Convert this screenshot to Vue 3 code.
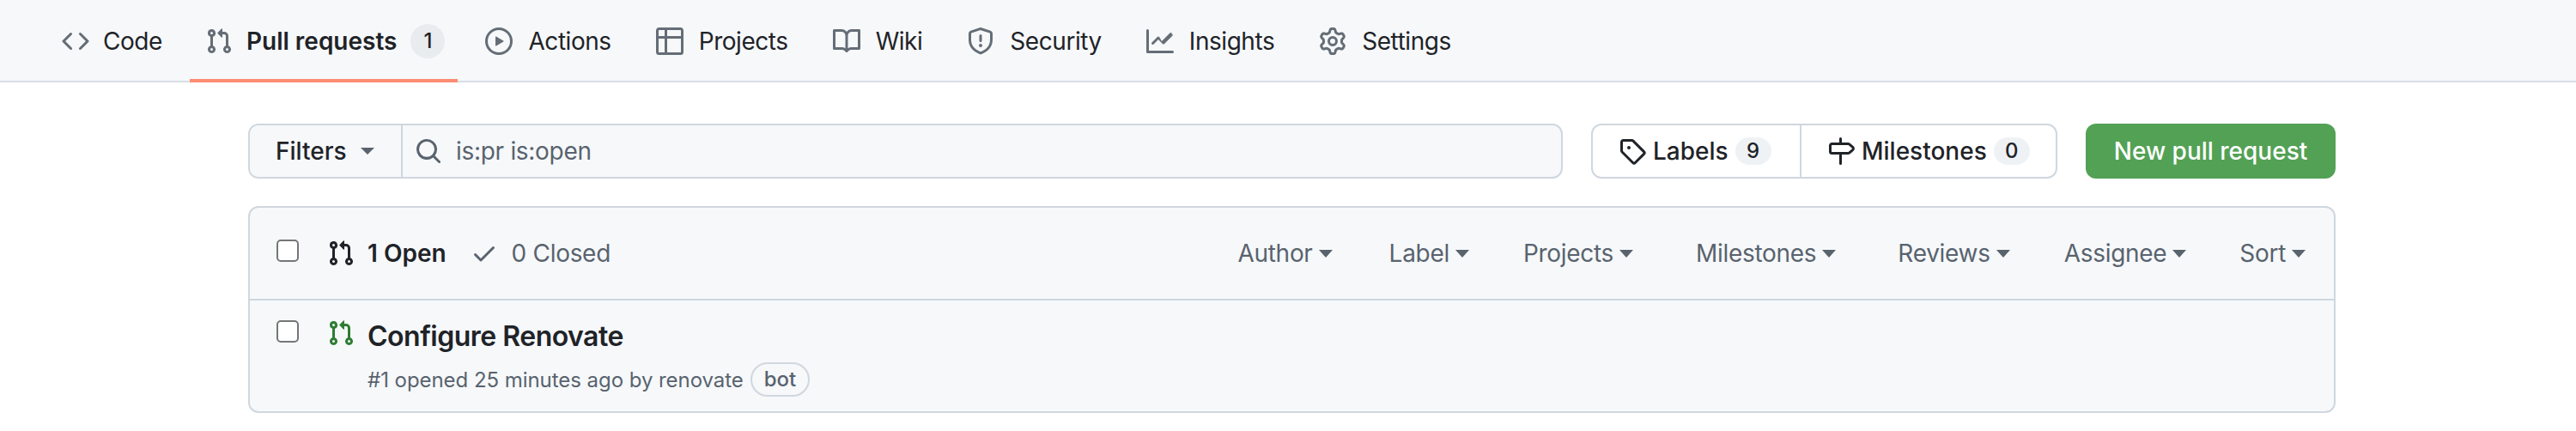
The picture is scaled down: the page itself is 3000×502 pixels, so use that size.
<template>
  <div class="page">
    <nav class="tabs">
      <a v-for="tab in tabs" :key="tab.label" class="tab" :class="{ active: tab.active }">
        <svg class="icon tab-icon" viewBox="0 0 16 16"><path :d="icons[tab.icon]" /></svg>
        <span class="tab-label">{{ tab.label }}</span>
        <span v-if="tab.count" class="tab-count">{{ tab.count }}</span>
      </a>
    </nav>

    <main class="content">
      <div class="toolbar">
        <div class="search">
          <button class="filters" type="button">Filters <span class="caret"></span></button>
          <div class="search-field">
            <svg class="icon search-icon" viewBox="0 0 16 16"><path :d="icons.search" /></svg>
            <span>is:pr is:open</span>
          </div>
        </div>
        <div class="links">
          <a class="link link-labels">
            <svg class="icon" viewBox="0 0 16 16"><path :d="icons.tag" /></svg>
            Labels <span class="count">9</span>
          </a>
          <a class="link link-milestones">
            <svg class="icon" viewBox="0 0 16 16"><path :d="icons.milestone" /></svg>
            Milestones <span class="count">0</span>
          </a>
        </div>
        <button class="new-pr" type="button">New pull request</button>
      </div>

      <div class="list">
        <div class="list-header">
          <span class="checkbox"></span>
          <svg class="icon pr-icon" viewBox="0 0 16 16"><path :d="icons.pull" /></svg>
          <span class="state open">1 Open</span>
          <svg class="icon check-icon" viewBox="0 0 16 16"><path :d="icons.check" /></svg>
          <span class="state closed">0 Closed</span>
          <div class="list-filters">
            <span
              v-for="f in filters"
              :key="f.label"
              class="list-filter"
              :style="{ marginLeft: f.gap + 'px' }"
            >{{ f.label }}<span class="caret small"></span></span>
          </div>
        </div>
        <div class="row">
          <span class="checkbox"></span>
          <svg class="icon pr-icon green" viewBox="0 0 16 16"><path :d="icons.pull" /></svg>
          <div class="row-body">
            <div class="row-title">Configure Renovate</div>
            <div class="row-meta">#1 opened 25 minutes ago by renovate <span class="bot">bot</span></div>
          </div>
        </div>
      </div>
    </main>
  </div>
</template>

<script setup>
const icons = {
  code: 'm11.28 3.22 4.25 4.25a.75.75 0 0 1 0 1.06l-4.25 4.25a.749.749 0 0 1-1.275-.326.749.749 0 0 1 .215-.734L13.94 8l-3.72-3.72a.749.749 0 0 1 .326-1.275.749.749 0 0 1 .734.215Zm-6.56 0a.751.751 0 0 1 1.042.018.751.751 0 0 1 .018 1.042L2.06 8l3.72 3.72a.749.749 0 0 1-.326 1.275.749.749 0 0 1-.734-.215L.47 8.53a.75.75 0 0 1 0-1.06Z',
  pull: 'M1.5 3.25a2.25 2.25 0 1 1 3 2.122v5.256a2.251 2.251 0 1 1-1.5 0V5.372A2.25 2.25 0 0 1 1.5 3.25Zm5.677-.177L9.573.677A.25.25 0 0 1 10 .854V2.5h1A2.5 2.5 0 0 1 13.5 5v5.628a2.251 2.251 0 1 1-1.5 0V5a1 1 0 0 0-1-1h-1v1.646a.25.25 0 0 1-.427.177L7.177 3.427a.25.25 0 0 1 0-.354ZM3.75 2.5a.75.75 0 1 0 0 1.5.75.75 0 0 0 0-1.5Zm0 9.5a.75.75 0 1 0 0 1.5.75.75 0 0 0 0-1.5Zm8.25.75a.75.75 0 1 0 1.5 0 .75.75 0 0 0-1.5 0Z',
  play: 'M8 0a8 8 0 1 1 0 16A8 8 0 0 1 8 0ZM1.5 8a6.5 6.5 0 1 0 13 0 6.5 6.5 0 0 0-13 0Zm4.879-2.773 4.264 2.559a.25.25 0 0 1 0 .428l-4.264 2.559A.25.25 0 0 1 6 10.559V5.442a.25.25 0 0 1 .379-.215Z',
  table: 'M0 1.75C0 .784.784 0 1.75 0h12.5C15.216 0 16 .784 16 1.75v12.5A1.75 1.75 0 0 1 14.25 16H1.75A1.75 1.75 0 0 1 0 14.25ZM6.5 6.5v8h7.75a.25.25 0 0 0 .25-.25V6.5Zm8-1.5V1.75a.25.25 0 0 0-.25-.25H6.5V5Zm-13 1.5v7.75c0 .138.112.25.25.25H5v-8ZM5 5V1.5H1.75a.25.25 0 0 0-.25.25V5Z',
  book: 'M0 1.75A.75.75 0 0 1 .75 1h4.253c1.227 0 2.317.59 3 1.501A3.743 3.743 0 0 1 11.006 1h4.245a.75.75 0 0 1 .75.75v10.5a.75.75 0 0 1-.75.75h-4.507a2.25 2.25 0 0 0-1.591.659l-.622.621a.75.75 0 0 1-1.06 0l-.622-.621A2.25 2.25 0 0 0 5.258 13H.75a.75.75 0 0 1-.75-.75Zm7.251 10.324.004-5.073-.002-2.253A2.25 2.25 0 0 0 5.003 2.5H1.5v9h3.757a3.75 3.75 0 0 1 1.994.574ZM8.755 4.75l-.004 7.322a3.752 3.752 0 0 1 1.992-.572H14.5v-9h-3.495a2.25 2.25 0 0 0-2.25 2.25Z',
  shield: 'M7.467.133a1.748 1.748 0 0 1 1.066 0l5.25 1.68A1.75 1.75 0 0 1 15 3.48V7c0 1.566-.32 3.182-1.303 4.682-.983 1.498-2.585 2.813-5.032 3.855a1.697 1.697 0 0 1-1.33 0c-2.447-1.042-4.049-2.357-5.032-3.855C1.32 10.182 1 8.566 1 7V3.48a1.75 1.75 0 0 1 1.217-1.667Zm.61 1.429a.25.25 0 0 0-.153 0l-5.25 1.68a.25.25 0 0 0-.174.238V7c0 1.358.275 2.666 1.057 3.86.784 1.194 2.121 2.34 4.366 3.297a.196.196 0 0 0 .154 0c2.245-.956 3.582-2.104 4.366-3.298C13.225 9.666 13.5 8.36 13.5 7V3.48a.251.251 0 0 0-.174-.237l-5.25-1.68ZM8.75 4.75v3a.75.75 0 0 1-1.5 0v-3a.75.75 0 0 1 1.5 0ZM9 10.5a1 1 0 1 1-2 0 1 1 0 0 1 2 0Z',
  graph: 'M1.5 1.75V13.5h13.75a.75.75 0 0 1 0 1.5H.75a.75.75 0 0 1-.75-.75V1.75a.75.75 0 0 1 1.5 0Zm14.28 2.53-5.25 5.25a.75.75 0 0 1-1.06 0L7 7.06 4.28 9.78a.751.751 0 0 1-1.042-.018.751.751 0 0 1-.018-1.042l3.25-3.25a.75.75 0 0 1 1.06 0L9 7.94l4.72-4.72a.751.751 0 0 1 1.042.018.751.751 0 0 1 .018 1.042Z',
  gear: 'M8 0a8.2 8.2 0 0 1 .701.031C9.444.095 9.99.645 10.16 1.29l.288 1.107c.018.066.079.158.212.224.231.114.454.243.668.386.123.082.233.09.299.071l1.103-.303c.644-.176 1.392.021 1.82.63.27.385.506.792.704 1.218.315.675.111 1.422-.364 1.891l-.814.806c-.049.048-.098.147-.088.294.016.257.016.515 0 .772-.01.147.038.246.088.294l.814.806c.475.469.679 1.216.364 1.891a7.977 7.977 0 0 1-.704 1.217c-.428.61-1.176.807-1.82.63l-1.102-.302c-.067-.019-.177-.011-.3.071a5.909 5.909 0 0 1-.668.386c-.133.066-.194.158-.211.224l-.29 1.106c-.168.646-.715 1.196-1.458 1.26a8.006 8.006 0 0 1-1.402 0c-.743-.064-1.289-.614-1.458-1.26l-.289-1.106c-.018-.066-.079-.158-.212-.224a5.738 5.738 0 0 1-.668-.386c-.123-.082-.233-.09-.299-.071l-1.103.303c-.644.176-1.392-.021-1.82-.63a8.12 8.12 0 0 1-.704-1.218c-.315-.675-.111-1.422.363-1.891l.815-.806c.05-.048.098-.147.088-.294a6.214 6.214 0 0 1 0-.772c.01-.147-.038-.246-.088-.294l-.815-.806C.635 6.045.431 5.298.746 4.623a7.92 7.92 0 0 1 .704-1.217c.428-.61 1.176-.807 1.82-.63l1.102.302c.067.019.177.011.3-.071.214-.143.437-.272.668-.386.133-.066.194-.158.211-.224l.29-1.106C6.009.645 6.556.095 7.299.03 7.53.01 7.764 0 8 0Zm-.571 1.525c-.036.003-.108.036-.137.146l-.289 1.105c-.147.561-.549.967-.998 1.189-.173.086-.34.183-.5.29-.417.278-.97.423-1.529.27l-1.103-.303c-.109-.03-.175.016-.195.045-.22.312-.412.644-.573.99-.014.031-.021.11.059.19l.815.806c.411.406.562.957.53 1.456a4.709 4.709 0 0 0 0 .582c.032.499-.119 1.05-.53 1.456l-.815.806c-.081.08-.073.159-.059.19.162.346.353.677.573.989.02.03.085.076.195.046l1.102-.303c.56-.153 1.113-.008 1.53.27.161.107.328.204.501.29.447.222.85.629.997 1.189l.289 1.105c.029.109.101.143.137.146a6.6 6.6 0 0 0 1.142 0c.036-.003.108-.036.137-.146l.289-1.105c.147-.561.549-.967.998-1.189.173-.086.34-.183.5-.29.417-.278.97-.423 1.529-.27l1.103.303c.109.029.175-.016.195-.045.22-.313.411-.644.573-.99.014-.031.021-.11-.059-.19l-.815-.806c-.411-.406-.562-.957-.53-1.456a4.709 4.709 0 0 0 0-.582c-.032-.499.119-1.05.53-1.456l.815-.806c.081-.08.073-.159.059-.19a6.464 6.464 0 0 0-.573-.989c-.02-.03-.085-.076-.195-.046l-1.102.303c-.56.153-1.113.008-1.53-.27a4.44 4.44 0 0 0-.501-.29c-.447-.222-.85-.629-.997-1.189l-.289-1.105c-.029-.11-.101-.143-.137-.146a6.6 6.6 0 0 0-1.142 0ZM11 8a3 3 0 1 1-6 0 3 3 0 0 1 6 0ZM9.5 8a1.5 1.5 0 1 0-3.001.001A1.5 1.5 0 0 0 9.5 8Z',
  search: 'M10.68 11.74a6 6 0 0 1-7.922-8.982 6 6 0 0 1 8.982 7.922l3.04 3.04a.749.749 0 0 1-.326 1.275.749.749 0 0 1-.734-.215ZM11.5 7a4.499 4.499 0 1 0-8.997 0A4.499 4.499 0 0 0 11.5 7Z',
  tag: 'M1 7.775V2.75C1 1.784 1.784 1 2.75 1h5.025c.464 0 .91.184 1.238.513l6.25 6.25a1.75 1.75 0 0 1 0 2.474l-5.026 5.026a1.75 1.75 0 0 1-2.474 0l-6.25-6.25A1.752 1.752 0 0 1 1 7.775Zm1.5 0c0 .066.026.13.073.177l6.25 6.25a.25.25 0 0 0 .354 0l5.025-5.025a.25.25 0 0 0 0-.354l-6.25-6.25a.25.25 0 0 0-.177-.073H2.75a.25.25 0 0 0-.25.25ZM6 5a1 1 0 1 1 0 2 1 1 0 0 1 0-2Z',
  milestone: 'M7.75 0a.75.75 0 0 1 .75.75V3h3.634c.414 0 .814.147 1.13.414l2.07 1.75a1.75 1.75 0 0 1 0 2.672l-2.07 1.75a1.75 1.75 0 0 1-1.13.414H8.5v5.25a.75.75 0 0 1-1.5 0V10H2.75A1.75 1.75 0 0 1 1 8.25v-3.5C1 3.784 1.784 3 2.75 3H7V.75A.75.75 0 0 1 7.75 0Zm4.384 8.5a.25.25 0 0 0 .161-.06l2.07-1.75a.248.248 0 0 0 0-.38l-2.07-1.75a.25.25 0 0 0-.161-.06H2.75a.25.25 0 0 0-.25.25v3.5c0 .138.112.25.25.25h9.384Z',
  check: 'M13.78 4.22a.75.75 0 0 1 0 1.06l-7.25 7.25a.75.75 0 0 1-1.06 0L2.22 9.28a.751.751 0 0 1 .018-1.042.751.751 0 0 1 1.042-.018L6 10.94l6.72-6.72a.75.75 0 0 1 1.06 0Z'
}

const tabs = [
  { label: 'Code', icon: 'code' },
  { label: 'Pull requests', icon: 'pull', count: 1, active: true },
  { label: 'Actions', icon: 'play' },
  { label: 'Projects', icon: 'table' },
  { label: 'Wiki', icon: 'book' },
  { label: 'Security', icon: 'shield' },
  { label: 'Insights', icon: 'graph' },
  { label: 'Settings', icon: 'gear' }
]

const filters = [
  { label: 'Author', gap: 0 },
  { label: 'Label', gap: 66 },
  { label: 'Projects', gap: 63 },
  { label: 'Milestones', gap: 73 },
  { label: 'Reviews', gap: 72 },
  { label: 'Assignee', gap: 63 },
  { label: 'Sort', gap: 62 }
]
</script>

<style scoped>
.page {
  width: 3000px;
  height: 502px;
  overflow: hidden;
  background: #fff;
  color: #1f2328;
  font-family: Inter, "Liberation Sans", sans-serif;
  font-size: 28px;
  letter-spacing: -0.3px;
}

.icon {
  width: 32px;
  height: 32px;
  flex-shrink: 0;
  fill: currentColor;
}

.tabs {
  display: flex;
  height: 96px;
  padding-left: 56px;
  gap: 20px;
  background: #f6f8fa;
  border-bottom: 2px solid #d8dee4;
  box-sizing: border-box;
  letter-spacing: -0.45px;
}

.tab {
  display: flex;
  align-items: center;
  height: 96px;
  padding: 0 16px;
  box-sizing: border-box;
}

.tab:first-child {
  padding-right: 12px;
}

.tab-icon {
  margin-right: 18px;
  color: #656d76;
}

.tab:first-child .tab-icon {
  margin-right: 16px;
}

.tab.active {
  margin-right: -4px;
  font-weight: 600;
  letter-spacing: 0;
  border-bottom: 4px solid #fd8c73;
  padding: 4px 15px 0 18px;
}

.tab.active .tab-icon {
  margin-right: 16px;
}

.tab-count {
  margin-left: 16px;
  min-width: 40px;
  height: 40px;
  line-height: 40px;
  text-align: center;
  border-radius: 20px;
  background: #e9ecef;
  font-size: 24px;
  font-weight: 500;
}

.content {
  padding: 48px 280px 0 289px;
}

.toolbar {
  display: flex;
  align-items: stretch;
  height: 64px;
}

.search {
  flex: 1;
  display: flex;
  border: 2px solid #d0d7de;
  border-radius: 12px;
  background: #f6f8fa;
  overflow: hidden;
}

.filters {
  display: flex;
  align-items: center;
  gap: 16px;
  width: 178px;
  padding: 0 0 0 30px;
  border: none;
  border-right: 2px solid #d0d7de;
  background: #f6f8fa;
  color: #1f2328;
  font: inherit;
  font-weight: 500;
  letter-spacing: 0;
  box-sizing: border-box;
}

.caret {
  display: inline-block;
  width: 0;
  height: 0;
  border-style: solid;
  border-width: 8px 8px 0;
  border-color: #59636e transparent transparent;
}

.caret.small {
  margin-left: 7px;
  border-width: 9px 8px 0;
}

.search-field {
  display: flex;
  align-items: center;
  gap: 16px;
  padding-left: 14px;
  color: #59636e;
}

.links {
  display: flex;
  margin-left: 33px;
  border: 2px solid #d0d7de;
  border-radius: 12px;
  font-weight: 500;
  letter-spacing: 0;
}

.link {
  display: flex;
  align-items: center;
  gap: 8px;
  padding: 0 0 0 30px;
  box-sizing: border-box;
}

.link-labels {
  width: 243px;
  border-right: 2px solid #d0d7de;
}

.link-milestones {
  width: 296px;
}

.count {
  width: 42px;
  height: 32px;
  line-height: 32px;
  text-align: center;
  border-radius: 16px;
  background: #eff2f5;
  font-size: 24px;
}

.new-pr {
  width: 291px;
  margin-left: 33px;
  border: none;
  border-radius: 12px;
  background: #53a155;
  color: #fff;
  font: inherit;
  font-weight: 500;
  letter-spacing: 0;
}

.list {
  margin-top: 32px;
  height: 241px;
  box-sizing: border-box;
  border: 2px solid #d0d7de;
  border-radius: 12px;
  background: #f6f8fa;
}

.list-header {
  display: flex;
  align-items: center;
  height: 108px;
  box-sizing: border-box;
  padding-left: 31px;
  border-bottom: 2px solid #d0d7de;
}

.checkbox {
  width: 26px;
  height: 26px;
  box-sizing: border-box;
  border: 2px solid #767676;
  border-radius: 5px;
  background: #fff;
  flex-shrink: 0;
}

.list-header .checkbox {
  margin-top: -6px;
}

.pr-icon {
  margin-left: 33px;
}

.pr-icon.green {
  margin-top: -1px;
  color: #2e7d32;
}

.state.open {
  margin-left: 15px;
  font-weight: 600;
  letter-spacing: 0;
}

.check-icon {
  margin-left: 28px;
  color: #59636e;
}

.state.closed {
  margin-left: 16px;
  color: #59636e;
}

.list-filters {
  display: flex;
  margin-left: auto;
  margin-right: 33px;
  color: #59636e;
}

.list-filter {
  display: flex;
  align-items: center;
}

.row {
  display: flex;
  align-items: flex-start;
  padding: 23px 0 0 31px;
}

.row-body {
  margin-left: 15px;
}

.row-title {
  margin-top: -3px;
  font-size: 32px;
  font-weight: 600;
  letter-spacing: -0.5px;
  line-height: 44px;
}

.row-meta {
  display: flex;
  align-items: center;
  gap: 8px;
  margin-top: 8px;
  color: #59636e;
  font-size: 24px;
  letter-spacing: -0.05px;
}

.bot {
  height: 40px;
  line-height: 36px;
  padding: 0 14px;
  box-sizing: border-box;
  border: 2px solid #d0d7de;
  border-radius: 20px;
  font-weight: 500;
}
</style>

<style>
html, body { margin: 0; background: #fff; }
</style>
